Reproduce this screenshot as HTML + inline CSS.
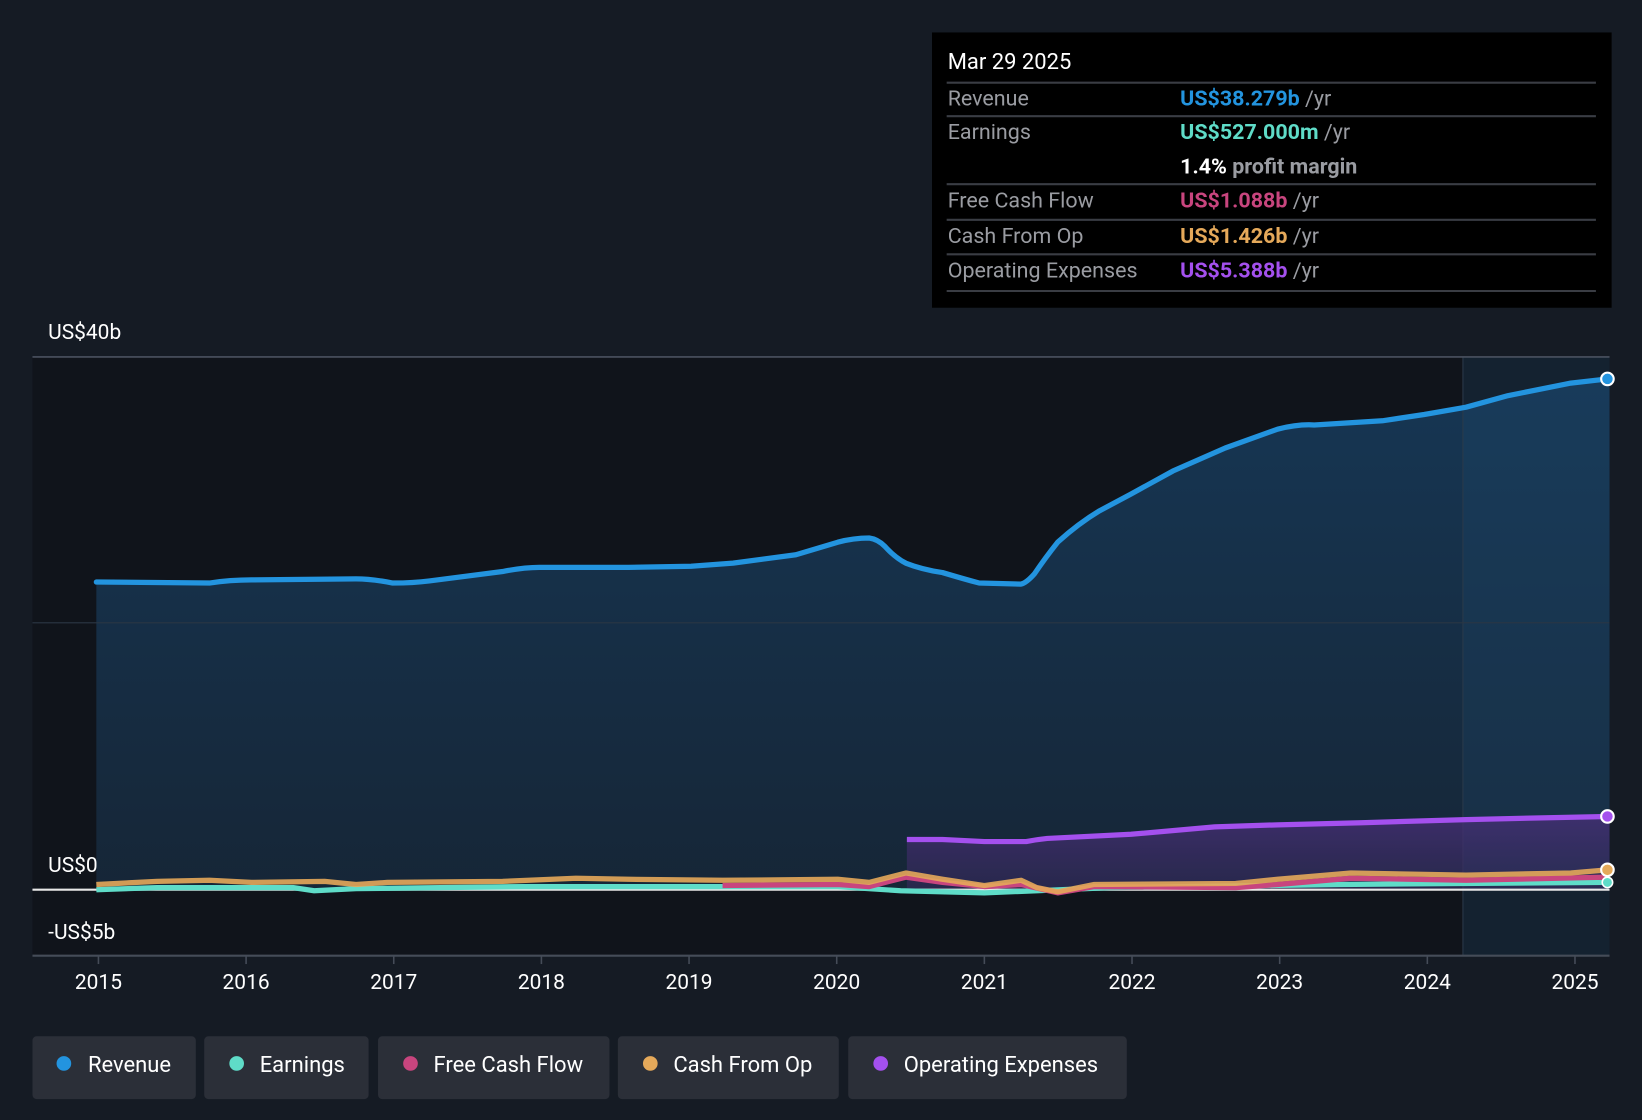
<!DOCTYPE html>
<html><head><meta charset="utf-8"><style>
html,body{margin:0;padding:0;background:#151b24;}
svg{display:block;}
text{font-family:"Roboto","Liberation Sans",sans-serif;}
</style></head><body>
<svg width="1642" height="1120" viewBox="0 0 1568 1070" preserveAspectRatio="none" xmlns="http://www.w3.org/2000/svg">
<defs>
<linearGradient id="rev" x1="0" y1="0" x2="0" y2="1"><stop offset="0" stop-color="#173a5a" stop-opacity="0.9"/><stop offset="1" stop-color="#16283a" stop-opacity="0.9"/></linearGradient>
<linearGradient id="opx" x1="0" y1="0" x2="0" y2="1"><stop offset="0" stop-color="#4a2f7a" stop-opacity="0.75"/><stop offset="1" stop-color="#3a2a60" stop-opacity="0.5"/></linearGradient>
</defs>
<rect width="1568" height="1070" fill="#151b24"/>
<rect x="31" y="341" width="1506" height="572" fill="#10141b"/>
<path d="M92,556 L200,557 L240,554 L340,553 L375,557 L410,555 L480,546 L515,542 L600,542 L660,541 L700,538 L760,530 L800,518 L830,514 L840,518 L865,538 L900,547 L935,557 L975,558 L985,552 L1010,518 L1050,488 L1080,472 L1120,450 L1170,428 L1220,410 L1255,406 L1320,402 L1360,396 L1400,389 L1440,378 L1500,366 L1535,362 L1537,362 L1537,850 L92,850 Z" fill="url(#rev)"/>
<rect x="1397" y="341" width="140" height="572" fill="#1e4a70" fill-opacity="0.25"/>
<line x1="1397" y1="341" x2="1397" y2="913" stroke="#2a3a4a" stroke-width="1"/>
<line x1="31" y1="341" x2="1537" y2="341" stroke="#4a5260" stroke-width="1.5"/>
<line x1="31" y1="595" x2="1537" y2="595" stroke="#2a3644" stroke-width="1"/>
<path d="M866,802 L900,802 L940,804 L980,804 L1000,801 L1080,797 L1160,790 L1220,788 L1300,786 L1400,783 L1535,780 L1537,780 L1537,850 L866,850 Z" fill="url(#opx)"/>
<path d="M92,556 L200,557 Q220,554 240,554 L340,553 Q355,553 375,557 Q395,557 410,555 L480,546 Q500,542 515,542 L600,542 L660,541 L700,538 L760,530 Q780,524 800,518 Q815,514 830,514 Q838,515 845,522 Q855,533 865,538 Q880,544 900,547 Q920,553 935,557 L975,558 Q980,557 988,548 Q998,533 1010,518 Q1030,500 1050,488 L1080,472 L1120,450 L1170,428 L1220,410 Q1240,405 1255,406 L1320,402 L1360,396 L1400,389 L1440,378 L1500,366 L1535,362" fill="none" stroke="#2394df" stroke-width="5" stroke-linejoin="round" stroke-linecap="round"/>
<path d="M866,802 L900,802 L940,804 L980,804 Q990,802 1000,801 L1080,797 L1160,790 L1220,788 L1300,786 L1400,783 L1535,780" fill="none" stroke="#a450ee" stroke-width="5" stroke-linejoin="round"/>
<line x1="31" y1="850" x2="1537" y2="850" stroke="#e8e8e8" stroke-width="2"/>
<path d="M92,850 L150,848 L280,848 L300,851 L340,849 L500,847 L800,847 L860,851 L940,853 L990,851 L1060,848 L1280,845 L1535,843" fill="none" stroke="#5fdcc8" stroke-width="5" stroke-linejoin="round"/>
<path d="M690,846 L800,845 L830,847 L865,838 L900,843 L940,847 L975,845 L1010,853 L1045,847 L1180,848 L1220,845 L1290,839 L1400,841 L1535,838" fill="none" stroke="#c8457e" stroke-width="5" stroke-linejoin="round"/>
<path d="M92,845 L150,842 L200,841 L240,843 L310,842 L340,845 L370,843 L480,842 L550,839 L600,840 L690,841 L800,840 L830,843 L865,834 L900,840 L940,846 L975,841 L990,848 L1010,852 L1045,845 L1180,844 L1220,840 L1290,834 L1400,836 L1500,834 L1535,831" fill="none" stroke="#e5a95a" stroke-width="5" stroke-linejoin="round" stroke-opacity="0.9"/>
<circle cx="1535" cy="362" r="6" fill="#2394df" stroke="#fff" stroke-width="2"/>
<circle cx="1535" cy="780" r="6" fill="#a450ee" stroke="#fff" stroke-width="2"/>
<circle cx="1535" cy="843" r="5" fill="#5fdcc8" stroke="#fff" stroke-width="1.5"/>
<circle cx="1535" cy="831" r="6" fill="#e5a95a" stroke="#fff" stroke-width="2"/>
<line x1="31" y1="913" x2="1537" y2="913" stroke="#454c58" stroke-width="2"/>
<g stroke="#454c58" stroke-width="1.5">
<line x1="94" y1="913" x2="94" y2="921"/><line x1="235" y1="913" x2="235" y2="921"/><line x1="376" y1="913" x2="376" y2="921"/><line x1="517" y1="913" x2="517" y2="921"/><line x1="658" y1="913" x2="658" y2="921"/><line x1="799" y1="913" x2="799" y2="921"/><line x1="940" y1="913" x2="940" y2="921"/><line x1="1081" y1="913" x2="1081" y2="921"/><line x1="1222" y1="913" x2="1222" y2="921"/><line x1="1363" y1="913" x2="1363" y2="921"/><line x1="1504" y1="913" x2="1504" y2="921"/>
</g>
<g fill="#ffffff" font-size="20" text-anchor="middle">
<text x="94" y="945">2015</text><text x="235" y="945">2016</text><text x="376" y="945">2017</text><text x="517" y="945">2018</text><text x="658" y="945">2019</text><text x="799" y="945">2020</text><text x="940" y="945">2021</text><text x="1081" y="945">2022</text><text x="1222" y="945">2023</text><text x="1363" y="945">2024</text><text x="1504" y="945">2025</text>
</g>
<g fill="#ffffff" font-size="20">
<text x="46" y="324">US$40b</text><text x="46" y="833">US$0</text><text x="46" y="897">-US$5b</text>
</g>
<rect x="890" y="31" width="649" height="263" fill="#000"/>
<text x="905" y="66" fill="#fff" font-size="21">Mar 29 2025</text>
<g stroke="#3a3d44" stroke-width="2">
<line x1="904" y1="79" x2="1524" y2="79"/><line x1="904" y1="111" x2="1524" y2="111"/><line x1="904" y1="176" x2="1524" y2="176"/><line x1="904" y1="210" x2="1524" y2="210"/><line x1="904" y1="243" x2="1524" y2="243"/><line x1="904" y1="278" x2="1524" y2="278"/>
</g>
<g font-size="20.5" fill="#9a9ca2">
<text x="905" y="101">Revenue</text><text x="905" y="133">Earnings</text><text x="905" y="198">Free Cash Flow</text><text x="905" y="232">Cash From Op</text><text x="905" y="265">Operating Expenses</text>
<text x="1127" y="101"><tspan fill="#2394df" font-weight="bold">US$38.279b</tspan> /yr</text>
<text x="1127" y="133"><tspan fill="#5fdcc8" font-weight="bold">US$527.000m</tspan> /yr</text>
<text x="1127" y="166"><tspan fill="#fff" font-weight="bold">1.4%</tspan> <tspan font-weight="bold">profit margin</tspan></text>
<text x="1127" y="198"><tspan fill="#c8457e" font-weight="bold">US$1.088b</tspan> /yr</text>
<text x="1127" y="232"><tspan fill="#e5a95a" font-weight="bold">US$1.426b</tspan> /yr</text>
<text x="1127" y="265"><tspan fill="#a450ee" font-weight="bold">US$5.388b</tspan> /yr</text>
</g>
<g>
<rect x="31" y="990" width="156" height="60" rx="4" fill="#2b2f38"/>
<rect x="195" y="990" width="157" height="60" rx="4" fill="#2b2f38"/>
<rect x="361" y="990" width="221" height="60" rx="4" fill="#2b2f38"/>
<rect x="590" y="990" width="211" height="60" rx="4" fill="#2b2f38"/>
<rect x="810" y="990" width="266" height="60" rx="4" fill="#2b2f38"/>
<circle cx="61" cy="1016" r="7" fill="#2394df"/>
<circle cx="226" cy="1016" r="7" fill="#5fdcc8"/>
<circle cx="392" cy="1016" r="7" fill="#c8457e"/>
<circle cx="621" cy="1016" r="7" fill="#e5a95a"/>
<circle cx="841" cy="1016" r="7" fill="#a450ee"/>
<g fill="#fff" font-size="21">
<text x="84" y="1024">Revenue</text><text x="248" y="1024">Earnings</text><text x="414" y="1024">Free Cash Flow</text><text x="643" y="1024">Cash From Op</text><text x="863" y="1024">Operating Expenses</text>
</g>
</g>
</svg>
</body></html>
